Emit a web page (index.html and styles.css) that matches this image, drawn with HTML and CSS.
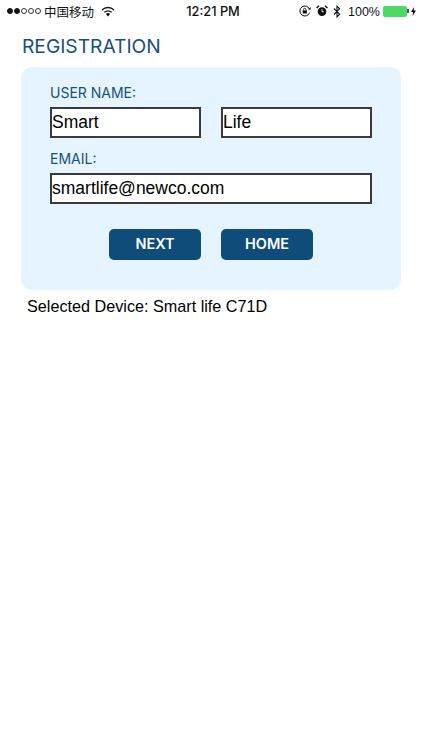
FILE: index.html
```html
<!DOCTYPE html>
<html lang="en">
<head>
    <meta charset="UTF-8">
    <meta name="viewport" content="width=device-width, initial-scale=1.0">
    <title>Registration</title>
    <link rel="stylesheet" href="styles.css">
</head>
<body>
    <div class="statusbar">
        <div class="status-left">
            <span class="signal">
                <i class="dot on"></i><i class="dot on"></i><i class="dot"></i><i class="dot"></i><i class="dot"></i>
            </span>
            <span class="carrier">中国移动</span>
            <svg class="wifi" width="14" height="11" viewBox="0 0 14 11">
                <path d="M7 10.5 L4.9 8 A3.2 3.2 0 0 1 9.1 8 Z" fill="#111"/>
                <path d="M3.4 6.3 A5.4 5.4 0 0 1 10.6 6.3" fill="none" stroke="#111" stroke-width="1.4"/>
                <path d="M1 3.9 A8.8 8.8 0 0 1 13 3.9" fill="none" stroke="#111" stroke-width="1.4"/>
            </svg>
        </div>
        <div class="status-time">12:21 PM</div>
        <div class="status-right">
            <svg width="12" height="12" viewBox="0 0 12 12">
                <path d="M10.6 7.6 A5 5 0 1 1 10.6 4.4" fill="none" stroke="#111" stroke-width="1"/>
                <path d="M9.2 4.6 L11.8 4.6 L11.4 2 Z" fill="#111"/>
                <rect x="3.7" y="5.3" width="4.2" height="3.2" fill="#111"/>
                <path d="M4.6 5.3 V4.4 A1.2 1.2 0 0 1 7 4.4 V5.3" fill="none" stroke="#111" stroke-width="0.8"/>
            </svg>
            <svg class="alarm" width="12" height="12" viewBox="0 0 12 12">
                <circle cx="6" cy="6.6" r="4.3" fill="#111"/>
                <path d="M0.6 3 L3 0.8 M11.4 3 L9 0.8" stroke="#111" stroke-width="1.5"/>
                <path d="M6 4 V6.8 H8" fill="none" stroke="#fff" stroke-width="0.8"/>
            </svg>
            <svg class="bt" width="8" height="13" viewBox="0 0 8 13">
                <path d="M1 3.5 L6.6 9.2 L4 11.8 V1.2 L6.6 3.8 L1 9.5" fill="none" stroke="#111" stroke-width="1.1"/>
            </svg>
            <span class="percent">100%</span>
            <span class="battery"></span>
            <span class="battery-tip"></span>
            <svg class="bolt" width="5" height="9" viewBox="0 0 5 9">
                <path d="M3 0 L0 5 H2 L1.6 9 L5 3.6 H2.8 Z" fill="#111"/>
            </svg>
        </div>
    </div>

    <h1 class="page-title">REGISTRATION</h1>

    <div class="card">
        <label class="field-label">USER NAME:</label>
        <div class="name-row">
            <input class="text-input" type="text" value="Smart">
            <input class="text-input" type="text" value="Life">
        </div>
        <label class="field-label email-label">EMAIL:</label>
        <input class="text-input" type="text" value="smartlife@newco.com">
        <div class="button-row">
            <button class="action-btn">NEXT</button>
            <button class="action-btn">HOME</button>
        </div>
    </div>

    <p class="device">Selected Device: Smart life C71D</p>
</body>
</html>
```

FILE: styles.css
```css
* {
    box-sizing: border-box;
}
body {
    margin: 0;
    background: white;
    font-family: Inter, "Liberation Sans", sans-serif;
    color: black;
}

/* Status bar */
.statusbar {
    display: flex;
    align-items: center;
    justify-content: space-between;
    height: 22px;
    padding: 0 6px 0 7px;
    font-size: 12.5px;
    color: #111;
    position: relative;
}
.status-left,
.status-right {
    display: flex;
    align-items: center;
}
.signal {
    display: flex;
    gap: 1px;
}
.dot {
    width: 6px;
    height: 6px;
    border: 0.8px solid #333;
    border-radius: 50%;
}
.dot.on {
    background: #111;
    border-color: #111;
}
.carrier {
    margin-left: 3px;
    font-family: "Noto Sans CJK SC", sans-serif;
    font-size: 12.5px;
}
.wifi {
    margin-left: 7px;
}
.status-time {
    position: absolute;
    left: 4px;
    right: 0;
    text-align: center;
    font-weight: 500;
    font-size: 12.8px;
}
.status-right {
    gap: 5px;
}
.percent {
    padding-top: 1px;
    font-family: "Liberation Sans", sans-serif;
    font-size: 12.5px;
    margin-left: 2px;
}
.battery {
    display: block;
    width: 24px;
    height: 11px;
    margin-left: -2px;
    border-radius: 2px;
    background: #4cd964;
}
.battery-tip {
    width: 2px;
    height: 4px;
    background: #555;
    margin-left: -5px;
}
.bolt {
    margin-left: -3px;
}

/* Page */
.page-title {
    margin: 13px 0 0 22px;
    font-size: 19.2px;
    line-height: 22px;
    font-weight: 400;
    color: #17507a;
}
.card {
    margin: 10px 21px 0 21px;
    height: 223px;
    padding: 17px 29px 0 29px;
    background: #e5f4fe;
    border-radius: 11px;
}
.field-label {
    display: block;
    font-size: 14px;
    line-height: 18px;
    color: #17507a;
}
.name-row {
    display: flex;
    gap: 20px;
    margin-top: 5px;
}
.name-row .text-input {
    width: 151px;
    flex: none;
}
.email-label {
    margin-top: 12px;
}
.text-input {
    display: block;
    width: 100%;
    height: 31px;
    margin: 0;
    padding: 0;
    border: 2px solid #3a3a3a;
    border-radius: 0;
    background: white;
    font-family: "Liberation Sans", sans-serif;
    font-size: 17.5px;
    color: black;
    outline: none;
}
.email-label + .text-input {
    margin-top: 5px;
}
.button-row {
    display: flex;
    justify-content: center;
    gap: 20px;
    margin-top: 25px;
}
.action-btn {
    width: 92px;
    height: 31px;
    padding: 0 0 2px 0;
    border: none;
    border-radius: 5px;
    background: #0f4c7a;
    color: white;
    font-family: inherit;
    font-size: 14.5px;
    font-weight: 600;
}
.device {
    margin: 6px 0 0 27px;
    font-family: "Liberation Sans", sans-serif;
    font-size: 16.2px;
    line-height: 20px;
}
```
